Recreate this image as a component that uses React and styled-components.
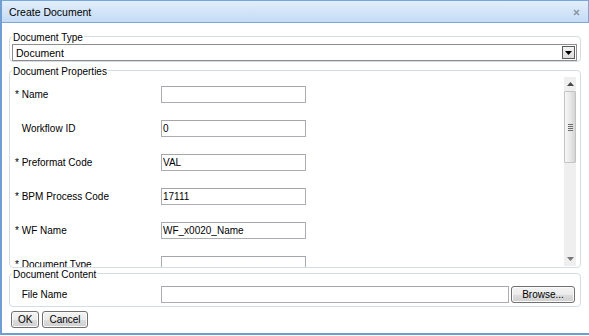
import React from "react";
import styled, { createGlobalStyle } from "styled-components";

const Global = createGlobalStyle`
  html, body {
    margin: 0;
    padding: 0;
    background: #ffffff;
  }
  body {
    font-family: "Liberation Sans", Arial, sans-serif;
    font-size: 10px;
    color: #000;
  }
`;

const fields = [
  { label: "Name", value: "", required: true },
  { label: "Workflow ID", value: "0", required: false },
  { label: "Preformat Code", value: "VAL", required: true },
  { label: "BPM Process Code", value: "17111", required: true },
  { label: "WF Name", value: "WF_x0020_Name", required: true },
  { label: "Document Type", value: "", required: true },
];

export default function App() {
  return (
    <>
      <Global />
      <Window>
        <TitleBar>
          <Title>Create Document</Title>
          <svg width="7" height="7" viewBox="0 0 7 7">
            <path d="M1 1 L6 6 M6 1 L1 6" stroke="#8c97a3" strokeWidth="1.6" />
          </svg>
        </TitleBar>
        <Body>
          <Group $top={0} $pad="5px 3px 0 2px">
            <Legend>Document Type</Legend>
            <SelectBox>
              <span>Document</span>
              <DropButton>
                <svg width="7" height="4" viewBox="0 0 7 4">
                  <path d="M0 0 H7 L3.5 4 Z" fill="#000" />
                </svg>
              </DropButton>
            </SelectBox>
          </Group>

          <Group $top={1} $pad="3px 3px 0 2px">
            <Legend>Document Properties</Legend>
            <ScrollArea>
              <Fields>
                {fields.map((f) => (
                  <FieldRow key={f.label}>
                    <Label>
                      <Star $hidden={!f.required}>*</Star> {f.label}
                    </Label>
                    <TextInput readOnly value={f.value} $width={145} />
                  </FieldRow>
                ))}
              </Fields>
              <ScrollBar>
                <ScrollArrow>
                  <svg width="7" height="4" viewBox="0 0 7 4">
                    <path d="M0 4 H7 L3.5 0 Z" fill="#4a4a4a" />
                  </svg>
                </ScrollArrow>
                <Thumb>
                  <Grip>
                    <i />
                    <i />
                    <i />
                    <i />
                  </Grip>
                </Thumb>
                <Track />
                <ScrollArrow>
                  <svg width="7" height="4" viewBox="0 0 7 4">
                    <path d="M0 0 H7 L3.5 4 Z" fill="#777" />
                  </svg>
                </ScrollArrow>
              </ScrollBar>
            </ScrollArea>
          </Group>

          <Group $top={-2} $pad="10px 7px 3px 2px">
            <Legend>Document Content</Legend>
            <FieldRow $pad>
              <Label>
                <Star $hidden>*</Star> File Name
              </Label>
              <TextInput readOnly value="" $width={348} />
              <Button $wide>Browse...</Button>
            </FieldRow>
          </Group>

          <Actions>
            <Button>OK</Button>
            <Button>Cancel</Button>
          </Actions>
        </Body>
      </Window>
    </>
  );
}

const Window = styled.div`
  width: 589px;
  height: 335px;
  box-sizing: border-box;
  border-left: 2px solid #6f9ed3;
  border-bottom: 2px solid #6f9ed3;
  display: flex;
  flex-direction: column;
`;

const TitleBar = styled.div`
  height: 23px;
  box-sizing: border-box;
  border-top: 1px solid #79a5d8;
  border-bottom: 1px solid #7eaadb;
  border-right: 1px solid #79a5d8;
  background: linear-gradient(#e2eefb, #c4dbf5);
  display: flex;
  align-items: center;
  justify-content: space-between;
  padding: 1px 8px 0 7px;
`;

const Title = styled.span`
  font-size: 10.5px;
  color: #000;
`;

const Body = styled.div`
  flex: 1;
  padding: 6px 8px 0 7px;
  display: flex;
  flex-direction: column;
`;

const Group = styled.fieldset`
  margin: ${(p) => p.$top}px 0 0 0;
  padding: ${(p) => p.$pad};
  border: 1px solid #d5dce4;
  border-radius: 4px;
  min-width: 0;
`;

const Legend = styled.legend`
  padding: 4px 1px 0;
  margin-bottom: -4px;
  font-size: 10px;
  line-height: 10px;
  color: #000;
`;

const SelectBox = styled.div`
  height: 17px;
  box-sizing: border-box;
  border: 1px solid #8d8d8d;
  display: flex;
  align-items: center;
  justify-content: space-between;
  padding-left: 3px;
  font-size: 10.5px;
`;

const DropButton = styled.div`
  width: 13px;
  height: 13px;
  box-sizing: border-box;
  margin-right: 1px;
  border: 1px solid #5c5c5c;
  background: linear-gradient(#f4f4f4, #dcdcdc);
  display: flex;
  align-items: center;
  justify-content: center;
`;

const ScrollArea = styled.div`
  height: 191px;
  display: flex;
  overflow: hidden;
`;

const Fields = styled.div`
  flex: 1;
  padding: 10px 0 0 3px;
  display: flex;
  flex-direction: column;
  gap: 17px;
`;

const FieldRow = styled.div`
  display: flex;
  align-items: center;
  height: 17px;
  flex: none;
  padding-left: ${(p) => (p.$pad ? "3px" : "0")};
  gap: 2px;
`;

const Label = styled.span`
  width: 144px;
  flex: none;
  white-space: nowrap;
`;

const Star = styled.span`
  visibility: ${(p) => (p.$hidden ? "hidden" : "visible")};
`;

const TextInput = styled.input`
  width: ${(p) => p.$width}px;
  height: 17px;
  box-sizing: border-box;
  border: 1px solid #abadb3;
  border-top-color: #a3a6ad;
  padding: 0 1px;
  margin: 0;
  font-family: "Liberation Sans", Arial, sans-serif;
  font-size: 10px;
  color: #000;
  outline: none;
  flex: none;
`;

const ScrollBar = styled.div`
  width: 12px;
  flex: none;
  margin: 1px 1px 1px 0;
  background: #efefef;
  display: flex;
  flex-direction: column;
`;

const ScrollArrow = styled.div`
  height: 14px;
  flex: none;
  display: flex;
  align-items: center;
  justify-content: center;
`;

const Thumb = styled.div`
  height: 72px;
  flex: none;
  box-sizing: border-box;
  border: 1px solid #c4c4c4;
  border-radius: 1px;
  background: linear-gradient(to right, #f6f6f6, #e6e6e6 60%, #d4d4d4);
  display: flex;
  align-items: center;
  justify-content: center;
`;

const Grip = styled.div`
  display: flex;
  flex-direction: column;
  gap: 1px;
  i {
    display: block;
    width: 5px;
    height: 1px;
    background: #6b6b6b;
  }
`;

const Track = styled.div`
  flex: 1;
`;

const Button = styled.button`
  height: 17px;
  box-sizing: border-box;
  margin: 0;
  padding: 0 ${(p) => (p.$wide ? "10px" : "6px")};
  border: 1px solid #707070;
  border-radius: 3px;
  box-shadow: inset 0 0 0 1px #fbfbfb;
  background: linear-gradient(#f4f4f4 0%, #ebebeb 50%, #dddddd 51%, #cfcfcf 100%);
  font-family: "Liberation Sans", Arial, sans-serif;
  font-size: 10px;
  line-height: 14px;
  color: #000;
  flex: none;
  width: ${(p) => (p.$wide ? "64px" : "auto")};
`;

const Actions = styled.div`
  display: flex;
  gap: 3px;
  margin-top: 4px;
  padding-left: 2px;
`;
